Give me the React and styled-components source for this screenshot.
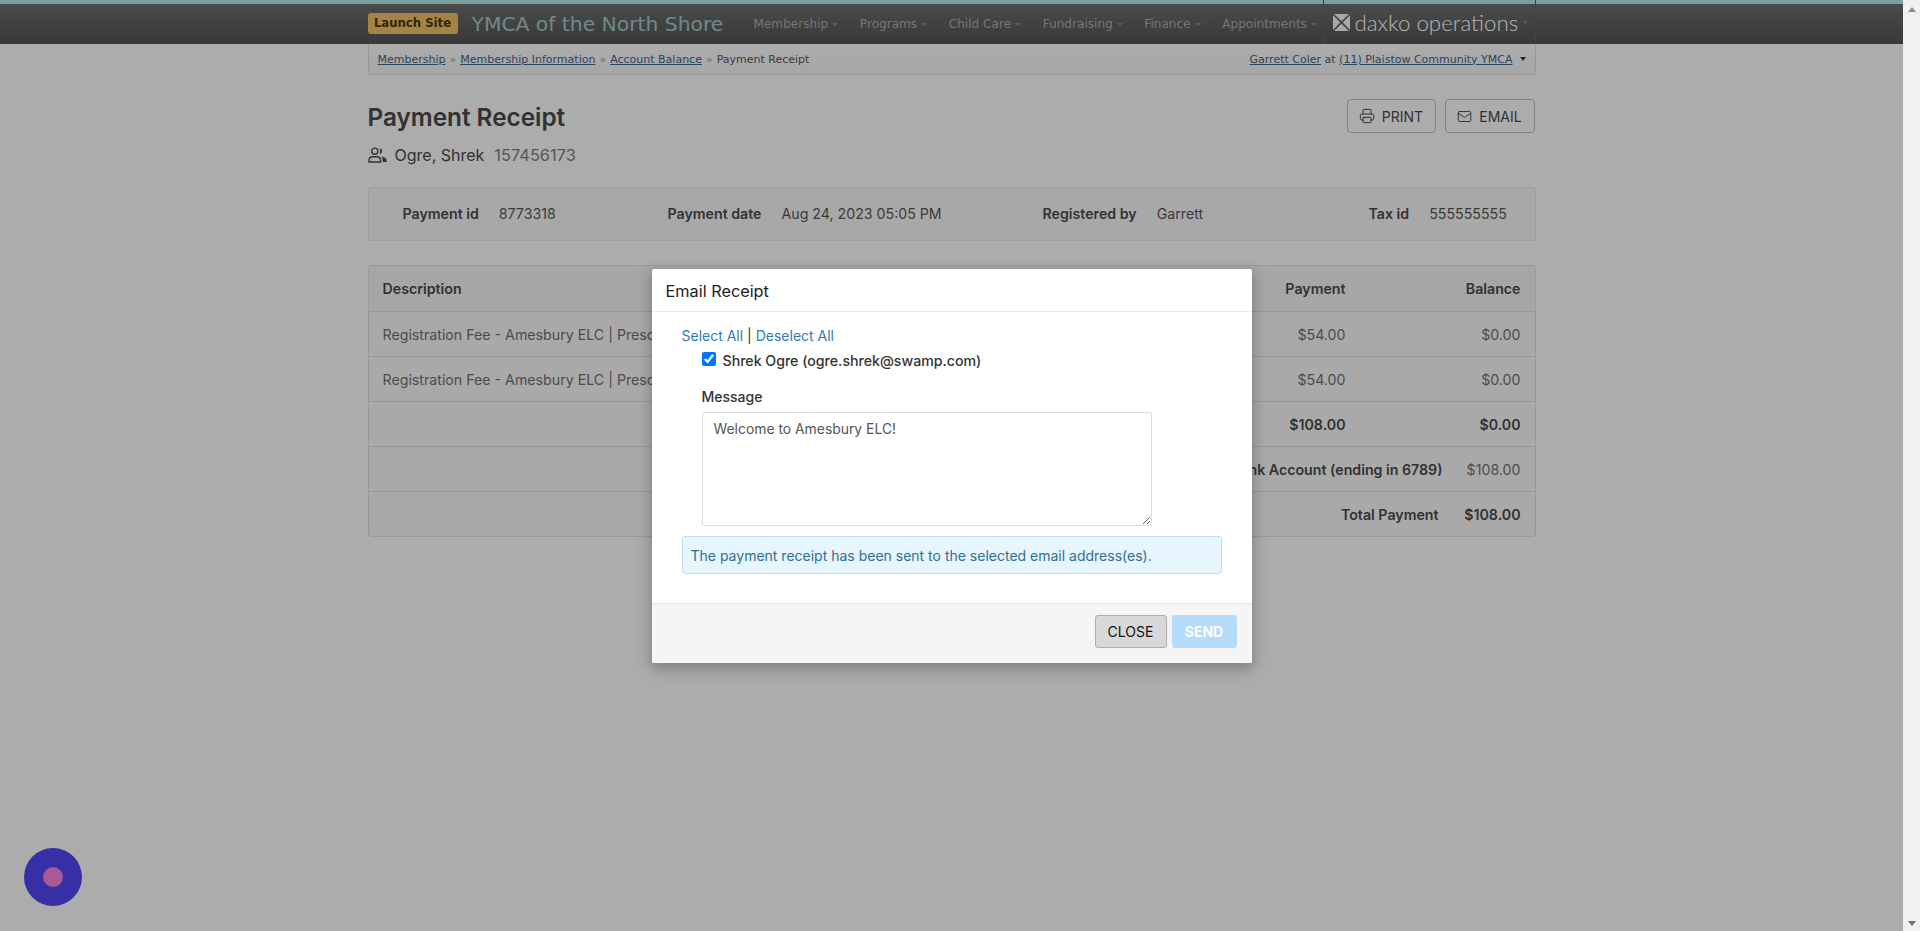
import React from "react";
import styled, { createGlobalStyle } from "styled-components";
import { Printer, Mail } from "lucide-react";

const Global = createGlobalStyle`
  html, body { margin: 0; padding: 0; height: 100%; overflow: hidden; }
  body { font-family: Inter, "Liberation Sans", sans-serif; font-size: 14px; background: #f7f7f7; }
  * { box-sizing: border-box; }
`;

const Shell = styled.div`
  display: flex;
  width: 1920px;
  height: 931px;
  overflow: hidden;
`;
const Main = styled.div`
  position: relative;
  flex: 1;
  background: #f7f7f7;
  overflow: hidden;
`;
const Backdrop = styled.div`
  position: absolute;
  inset: 0;
  background: rgba(0, 0, 0, 0.3);
  display: flex;
  justify-content: center;
  align-items: flex-start;
  padding-top: 269px;
`;
const ScrollTrack = styled.div`
  width: 17px;
  background: #f1f1f1;
  display: flex;
  flex-direction: column;
  justify-content: space-between;
  align-items: center;
  padding: 7px 0 5px;
`;
const ScrollUp = styled.div`
  width: 0;
  height: 0;
  border: 4px solid transparent;
  border-top: 0;
  border-bottom: 5px solid #8f8f8f;
`;
const ScrollDown = styled(ScrollUp)`
  border-bottom: 0;
  border-top: 5px solid #6e6e6e;
`;

const TopStrip = styled.div`
  height: 4px;
  background: #b0e4e1;
`;
const NavBar = styled.div`
  height: 40px;
  background: linear-gradient(#6b6b6b, #525252);
`;
const Wrap = styled.div`
  width: 1168px;
  margin: 0 auto;
`;
const NavInner = styled(Wrap)`
  display: flex;
  align-items: center;
  height: 100%;
`;
const Badge = styled.span`
  width: 90px;
  height: 21px;
  margin: 0 14px 2px 0;
  background: #ebbd62;
  border-radius: 3px;
  color: #453610;
  font: bold 11.7px/21px "DejaVu Sans", sans-serif;
  text-align: center;
`;
const Brand = styled.span`
  width: 253px;
  margin-right: 29px;
  color: #a2c4c4;
  font: 20.3px "DejaVu Sans", sans-serif;
  white-space: nowrap;
`;
const NavMenu = styled.div`
  display: flex;
  gap: 21.6px;
`;
const NavItem = styled.span`
  display: flex;
  align-items: center;
  color: #a8a8a8;
  font: 12.1px "DejaVu Sans", sans-serif;
  white-space: nowrap;
`;
const Caret = styled.i`
  width: 0;
  height: 0;
  margin-left: 4px;
  border: 3.5px solid transparent;
  border-bottom: 0;
  border-top: 3px solid #858585;
`;
const LogoBox = styled.div`
  display: flex;
  align-items: center;
  margin-left: auto;
  width: 213px;
  height: 44px;
  margin-top: -4px;
  padding-left: 9px;
  border-left: 1px solid #606060;
  border-right: 1px solid #606060;
`;
const LogoText = styled.span`
  margin-left: 5px;
  color: #ffffff;
  font: 300 22.3px Lato, sans-serif;
  white-space: nowrap;
`;

const Crumbs = styled(Wrap)`
  height: 31px;
  padding: 0 9px;
  display: flex;
  align-items: center;
  justify-content: space-between;
  border: 1px solid #dcdcdc;
  border-top: 0;
  border-radius: 0 0 3px 3px;
  background: linear-gradient(#f7f7f7, #eeeeee);
  font: 11px "DejaVu Sans", sans-serif;
  color: #555;
`;
const CrumbLink = styled.a`
  color: #3f6285;
  text-decoration: underline;
`;
const Sep = styled.span`
  margin: 0 4px;
  color: #999;
`;
const CrumbCaret = styled.i`
  display: inline-block;
  width: 0;
  height: 0;
  margin-left: 7px;
  vertical-align: 2px;
  border: 3.5px solid transparent;
  border-bottom: 0;
  border-top: 4px solid #333;
`;

const Head = styled(Wrap)`
  display: flex;
  justify-content: space-between;
  align-items: flex-start;
  margin-top: 24px;
`;
const Title = styled.h1`
  margin: 0;
  color: #484848;
  font: 600 24.3px/36px Inter, sans-serif;
`;
const Person = styled.div`
  display: flex;
  align-items: center;
  height: 24px;
  margin-top: 8px;
  font-size: 16px;
  color: #484848;
`;
const PersonName = styled.span`
  margin-left: 8px;
`;
const PersonId = styled.span`
  margin-left: 10px;
  color: #7c7c7c;
  font-size: 16.4px;
`;
const Actions = styled.div`
  display: flex;
  gap: 9px;
  margin-right: 1px;
`;
const ActionButton = styled.button`
  display: flex;
  align-items: center;
  justify-content: center;
  gap: 7px;
  width: ${(p) => p.$w}px;
  height: 34px;
  padding: 0;
  background: transparent;
  border: 1px solid #bdbdbd;
  border-radius: 4px;
  color: #484848;
  font: 14px Inter, sans-serif;
`;

const InfoBar = styled(Wrap)`
  display: grid;
  grid-template-columns: 265px 375px 326px 1fr;
  align-items: center;
  height: 54px;
  margin-top: 20px;
  padding: 0 0 2px 34px;
  background: #f1f1f1;
  border: 1px solid #e2e2e2;
  border-radius: 3px;
  color: #555;
  font-size: 14.2px;
`;
const InfoCell = styled.div`
  display: flex;
  gap: 20px;
  white-space: nowrap;
`;
const InfoLabel = styled.b`
  font-weight: 600;
  color: #4a4a4a;
`;

const Table = styled(Wrap)`
  margin-top: 24px;
  border: 1px solid #dcdcdc;
  border-radius: 3px;
  background: #f3f3f3;
  font-size: 14.2px;
`;
const Row = styled.div`
  display: flex;
  align-items: center;
  height: 45px;
  padding: 0 14px;
  background: ${(p) => (p.$head ? "#eeeeee" : "transparent")};
  border-top: ${(p) => (p.$first ? "0" : "1px solid #d8d8d8")};
  color: #6e6e6e;
  font-weight: ${(p) => (p.$bold ? 600 : 400)};
`;
const Grow = styled.div`
  flex: 1;
  text-align: ${(p) => (p.$right ? "right" : "left")};
  white-space: nowrap;
`;
const Amount = styled.div`
  width: ${(p) => p.$w}px;
  text-align: right;
`;
const Strong = styled.span`
  font-weight: 600;
  color: #484848;
`;

const Modal = styled.div`
  width: 600px;
  height: 394px;
  background: #fff;
  border-radius: 2px;
  box-shadow: 0 5px 15px rgba(0, 0, 0, 0.3);
  display: flex;
  flex-direction: column;
`;
const ModalHead = styled.div`
  height: 43px;
  padding: 1px 14px 0;
  display: flex;
  align-items: center;
  border-bottom: 1px solid #e8e8e8;
  color: #222;
  font-size: 16.3px;
`;
const ModalBody = styled.div`
  flex: 1;
  padding: 13px 30px 0;
`;
const LinkRow = styled.div`
  line-height: 21px;
  color: #333;
`;
const BlueLink = styled.a`
  color: #337ab7;
`;
const CheckRow = styled.label`
  display: flex;
  align-items: flex-start;
  gap: 7px;
  margin: 4px 0 0 20px;
  line-height: 21px;
  color: #333;
  font-size: 14.15px;
  font-weight: 500;
`;
const Check = styled.input`
  width: 14px;
  height: 14px;
  margin: 2px 0 0;
  accent-color: #0075ff;
`;
const FieldLabel = styled.div`
  margin: 16px 0 5px 20px;
  line-height: 20px;
  font-weight: 500;
  color: #333;
`;
const MessageBox = styled.textarea`
  display: block;
  width: 450px;
  height: 114px;
  margin-left: 20px;
  padding: 6px 11px;
  border: 1px solid #ddd;
  border-radius: 2px;
  color: #555;
  font: 13.9px/20px Inter, sans-serif;
`;
const Notice = styled.div`
  display: flex;
  align-items: center;
  width: 540px;
  height: 38px;
  margin-top: 10px;
  padding-left: 8px;
  background: #e6f5fe;
  border: 1px solid #bcdff1;
  border-radius: 3px;
  color: #31708f;
`;
const ModalFoot = styled.div`
  height: 60px;
  padding: 11px 15px 0 0;
  display: flex;
  align-items: flex-start;
  justify-content: flex-end;
  gap: 5px;
  background: #f5f5f5;
  border-top: 1px solid #e8e8e8;
  border-radius: 0 0 2px 2px;
`;
const CloseButton = styled.button`
  width: 72px;
  height: 33px;
  padding: 0;
  background: #d8d8d8;
  border: 1px solid #adadad;
  border-radius: 3px;
  color: #111;
  font: 14px Inter, sans-serif;
`;
const SendButton = styled.button`
  width: 65px;
  height: 33px;
  padding: 0;
  background: #b5dcfb;
  border: 0;
  border-radius: 3px;
  color: #fff;
  font: 700 14px Inter, sans-serif;
`;

const ChatBubble = styled.div`
  position: absolute;
  left: 24px;
  top: 848px;
  width: 58px;
  height: 58px;
  border-radius: 50%;
  background: #4e44ec;
  display: flex;
  align-items: center;
  justify-content: center;
`;
const ChatDot = styled.div`
  width: 20px;
  height: 20px;
  border-radius: 50%;
  background: #f380d6;
`;

const PeopleIcon = () => (
  <svg width="19" height="16" viewBox="0 0 19 16" fill="none" stroke="#484848" strokeWidth="1.4">
    <circle cx="6.8" cy="4.2" r="3.1" />
    <path d="M1 15v-1.6C1 11 3 9.7 5 9.7h3.6c2 0 4 1.3 4 3.7V15z" />
    <path d="M11.6 .9a3.4 3.4 0 0 1 0 6.6c.9-2 .9-4.6 0-6.6zM13.4 9.6c2.6.4 5.2 1.6 5.2 3.8V15h-3.8c0-2.2-.3-3.8-1.4-5.4z" fill="#484848" stroke="none" />
  </svg>
);

const DaxkoMark = () => (
  <svg width="17" height="17" viewBox="0 0 17 17" fill="#f2f2f2">
    <path d="M1 0h15L8.5 7.2zM0 1l7.2 7.5L0 16zM17 1v15L9.8 8.5zM1 17l7.5-7.2L16 17z" />
  </svg>
);

const navItems = ["Membership", "Programs", "Child Care", "Fundraising", "Finance", "Appointments"];

const App = () => {
  return (
    <Shell>
      <Global />
      <Main>
        <TopStrip />
        <NavBar>
          <NavInner>
            <Badge>Launch Site</Badge>
            <Brand>YMCA of the North Shore</Brand>
            <NavMenu>
              {navItems.map((n) => (
                <NavItem key={n}>
                  {n}
                  <Caret />
                </NavItem>
              ))}
            </NavMenu>
            <LogoBox>
              <DaxkoMark />
              <LogoText>daxko operations</LogoText>
              <Caret />
            </LogoBox>
          </NavInner>
        </NavBar>
        <Crumbs>
          <div>
            <CrumbLink>Membership</CrumbLink>
            <Sep>»</Sep>
            <CrumbLink>Membership Information</CrumbLink>
            <Sep>»</Sep>
            <CrumbLink>Account Balance</CrumbLink>
            <Sep>»</Sep>
            Payment Receipt
          </div>
          <div>
            <CrumbLink>Garrett Coler</CrumbLink> at <CrumbLink>(11) Plaistow Community YMCA</CrumbLink>
            <CrumbCaret />
          </div>
        </Crumbs>
        <Head>
          <div>
            <Title>Payment Receipt</Title>
            <Person>
              <PeopleIcon />
              <PersonName>Ogre, Shrek</PersonName>
              <PersonId>157456173</PersonId>
            </Person>
          </div>
          <Actions>
            <ActionButton $w={89}>
              <Printer size={16} strokeWidth={1.5} />
              PRINT
            </ActionButton>
            <ActionButton $w={90}>
              <Mail size={15} strokeWidth={1.5} />
              EMAIL
            </ActionButton>
          </Actions>
        </Head>
        <InfoBar>
          <InfoCell>
            <InfoLabel>Payment id</InfoLabel>8773318
          </InfoCell>
          <InfoCell>
            <InfoLabel>Payment date</InfoLabel>Aug 24, 2023 05:05 PM
          </InfoCell>
          <InfoCell>
            <InfoLabel>Registered by</InfoLabel>Garrett
          </InfoCell>
          <InfoCell>
            <InfoLabel>Tax id</InfoLabel>555555555
          </InfoCell>
        </InfoBar>
        <Table>
          <Row $head $first $bold>
            <Grow>
              <Strong>Description</Strong>
            </Grow>
            <Strong>Payment</Strong>
            <Amount $w={175}>
              <Strong>Balance</Strong>
            </Amount>
          </Row>
          <Row>
            <Grow>Registration Fee - Amesbury ELC | Preschool</Grow>
            $54.00
            <Amount $w={175}>$0.00</Amount>
          </Row>
          <Row>
            <Grow>Registration Fee - Amesbury ELC | Preschool</Grow>
            $54.00
            <Amount $w={175}>$0.00</Amount>
          </Row>
          <Row>
            <Grow />
            <Strong>$108.00</Strong>
            <Amount $w={175}>
              <Strong>$0.00</Strong>
            </Amount>
          </Row>
          <Row>
            <Grow $right>
              <Strong>Bank Account (ending in 6789)</Strong>
            </Grow>
            <Amount $w={78}>$108.00</Amount>
          </Row>
          <Row>
            <Grow $right>
              <Strong>Total Payment</Strong>
            </Grow>
            <Amount $w={82}>
              <Strong>$108.00</Strong>
            </Amount>
          </Row>
        </Table>
        <ChatBubble>
          <ChatDot />
        </ChatBubble>
        <Backdrop>
          <Modal>
            <ModalHead>Email Receipt</ModalHead>
            <ModalBody>
              <LinkRow>
                <BlueLink>Select All</BlueLink> | <BlueLink>Deselect All</BlueLink>
              </LinkRow>
              <CheckRow>
                <Check type="checkbox" defaultChecked />
                Shrek Ogre (ogre.shrek@swamp.com)
              </CheckRow>
              <FieldLabel>Message</FieldLabel>
              <MessageBox defaultValue="Welcome to Amesbury ELC!" />
              <Notice>The payment receipt has been sent to the selected email address(es).</Notice>
            </ModalBody>
            <ModalFoot>
              <CloseButton>CLOSE</CloseButton>
              <SendButton>SEND</SendButton>
            </ModalFoot>
          </Modal>
        </Backdrop>
      </Main>
      <ScrollTrack>
        <ScrollUp />
        <ScrollDown />
      </ScrollTrack>
    </Shell>
  );
};

export default App;
